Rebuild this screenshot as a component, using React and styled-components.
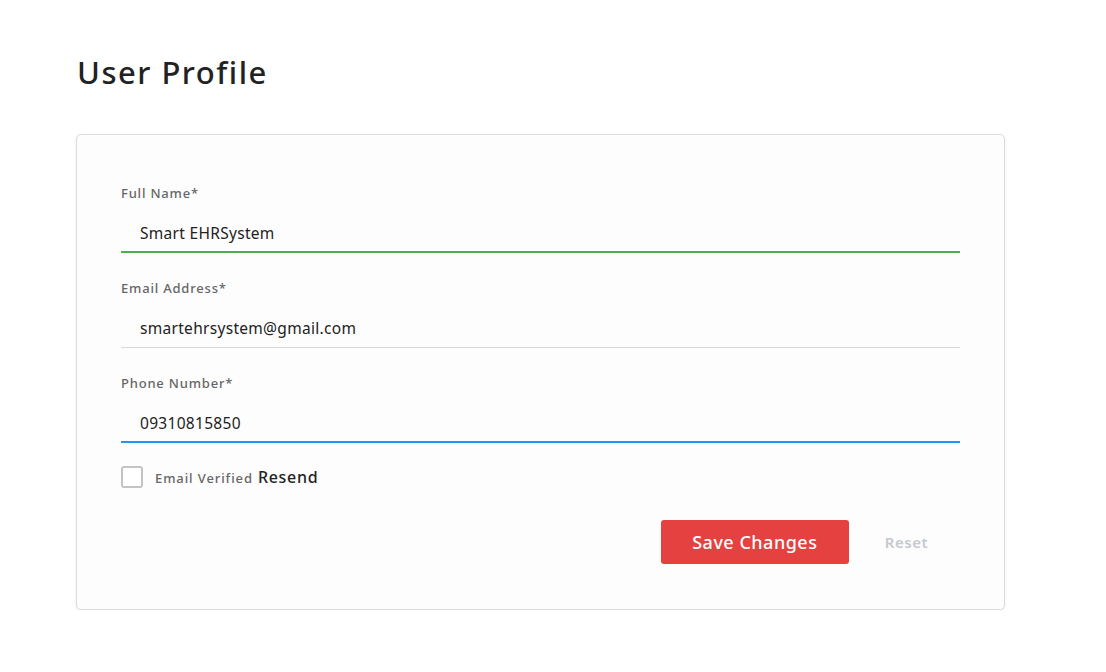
import React, { useState } from 'react'
import styled, { createGlobalStyle } from 'styled-components'

const GlobalStyle = createGlobalStyle`
	body {
		margin: 0;
		background: #ffffff;
		font-family: "Noto Sans", "Open Sans", sans-serif;
		color: #222;
	}
`

const Page = styled.div`
	padding: 50px 0 0 77px;
	width: 928px;
`

const Title = styled.h1`
	margin: 0 0 40px;
	font-size: 31px;
	line-height: 44px;
	font-weight: 500;
	letter-spacing: 1.5px;
	color: #222;
`

const Card = styled.form`
	background: #fdfdfd;
	border: 1px solid #dcdcdc;
	border-radius: 5px;
	box-shadow: 0 1px 3px rgba(0, 0, 0, 0.08);
	padding: 51px 44px 45px;
	margin-left: -1px;
`

const Field = styled.div`
	margin-bottom: ${p => p.$last ? '0' : '28px'};
`

const Label = styled.label`
	display: block;
	font-size: 13px;
	line-height: 14px;
	font-weight: 500;
	letter-spacing: 0.8px;
	color: #666;
	margin-bottom: 12px;
`

const Input = styled.input`
	display: block;
	box-sizing: border-box;
	width: 100%;
	height: 41px;
	border: none;
	border-bottom: ${p => p.$accent ? `2px solid ${p.$accent}` : '1px solid #d8d8d8'};
	padding: ${p => p.$accent ? '2px 19px 0' : '2px 19px 1px'};
	background: transparent;
	font-family: inherit;
	font-size: 15.5px;
	letter-spacing: 0.3px;
	color: #222;
	outline: none;
`

const CheckRow = styled.div`
	display: flex;
	align-items: center;
	margin-top: 23px;
	gap: 12px;
`

const Box = styled.span`
	box-sizing: border-box;
	width: 22px;
	height: 22px;
	border: 2px solid #c4c4c4;
	border-radius: 3px;
	background: #fff;
`

const CheckText = styled.span`
	font-size: 13px;
	font-weight: 500;
	letter-spacing: 0.9px;
	color: #666;
`

const Resend = styled.span`
	font-size: 16px;
	font-weight: 500;
	letter-spacing: 0.7px;
	color: #222;
	margin-left: 5px;
`

const Actions = styled.div`
	display: flex;
	justify-content: flex-end;
	align-items: center;
	margin-top: 32px;
	padding-right: 32px;
`

const SaveButton = styled.button`
	width: 188px;
	height: 44px;
	border: none;
	border-radius: 3px;
	background: #e54141;
	color: #fff;
	font-family: inherit;
	font-size: 18px;
	font-weight: 500;
	letter-spacing: 0.5px;
	cursor: pointer;
`

const ResetButton = styled.button`
	border: none;
	background: none;
	margin-left: 36px;
	padding: 0;
	font-family: inherit;
	font-size: 15px;
	font-weight: 600;
	letter-spacing: 0.5px;
	color: #c6c9ce;
	cursor: pointer;
`

export default function App() {
	const [name, setName] = useState('Smart EHRSystem')
	const [email, setEmail] = useState('smartehrsystem@gmail.com')
	const [phone, setPhone] = useState('09310815850')

	return (
		<>
			<GlobalStyle />
			<Page>
				<Title>User Profile</Title>
				<Card onSubmit={e => e.preventDefault()}>
					<Field>
						<Label>Full Name*</Label>
						<Input $accent="#4caf50" value={name} onChange={e => setName(e.target.value)} />
					</Field>
					<Field>
						<Label>Email Address*</Label>
						<Input value={email} onChange={e => setEmail(e.target.value)} />
					</Field>
					<Field $last>
						<Label>Phone Number*</Label>
						<Input $accent="#2196f3" value={phone} onChange={e => setPhone(e.target.value)} />
					</Field>
					<CheckRow>
						<Box />
						<CheckText>Email Verified<Resend>Resend</Resend></CheckText>
					</CheckRow>
					<Actions>
						<SaveButton type="submit">Save Changes</SaveButton>
						<ResetButton type="button">Reset</ResetButton>
					</Actions>
				</Card>
			</Page>
		</>
	)
}
